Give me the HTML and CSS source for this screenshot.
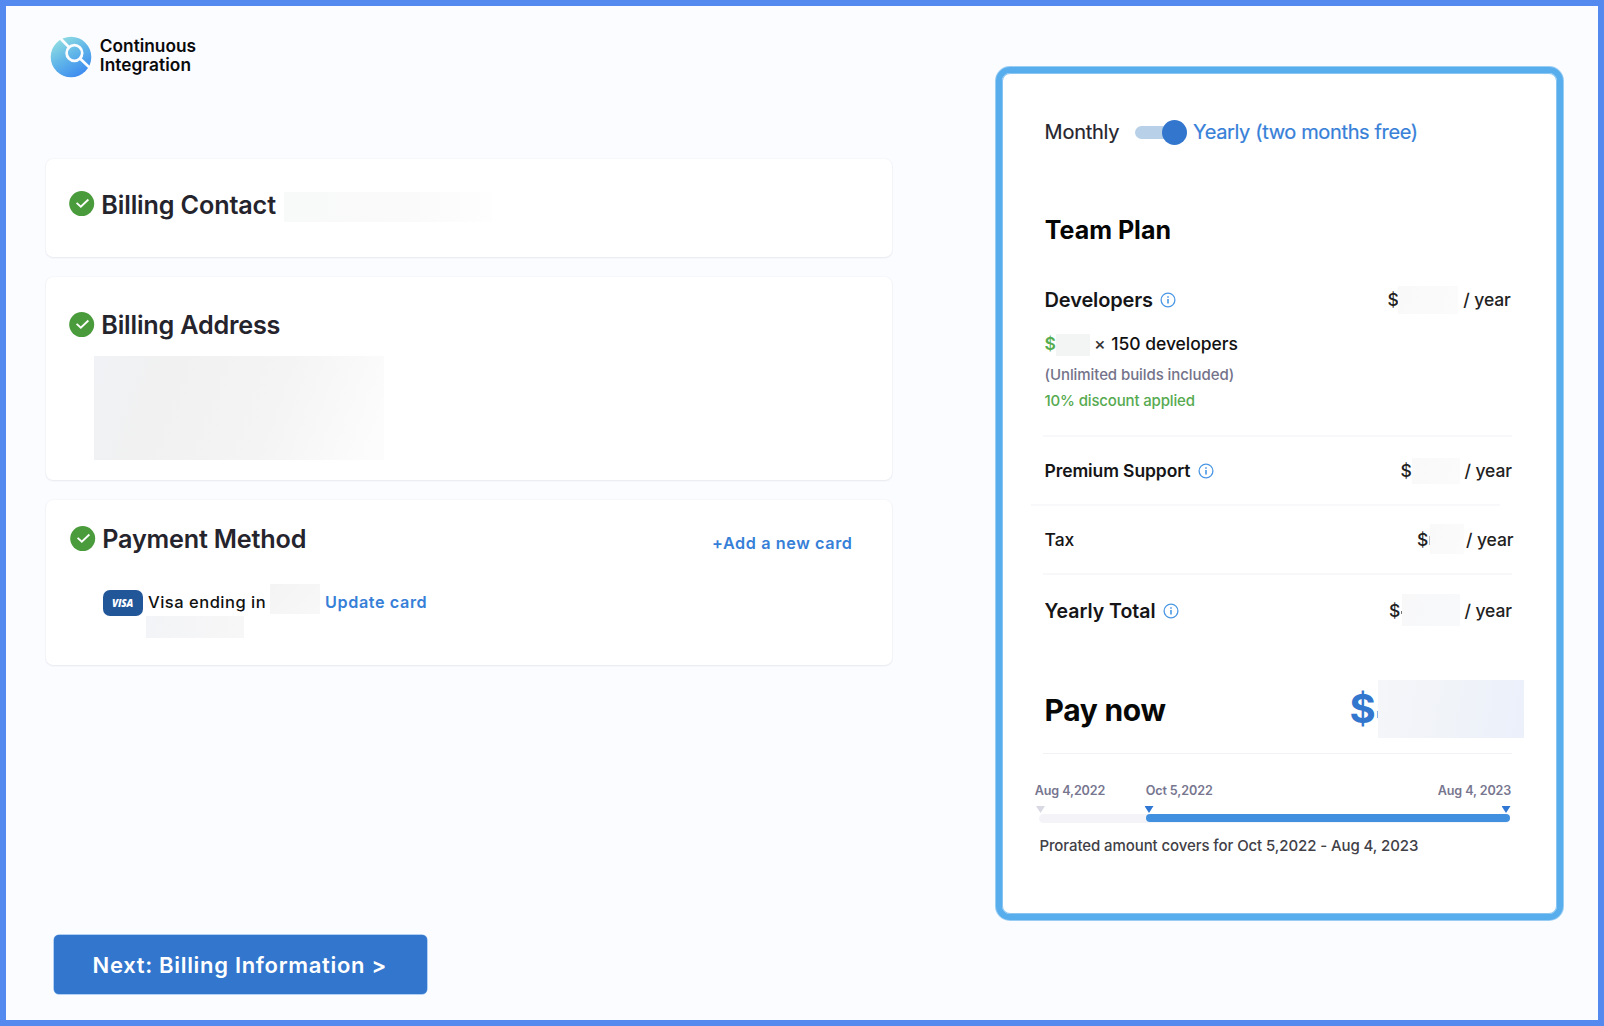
FILE: index.html
```html
<!DOCTYPE html>
<html lang="en">
<head>
<meta charset="utf-8">
<title>Continuous Integration - Billing</title>
<link rel="stylesheet" href="styles.css">
</head>
<body>
<svg width="0" height="0" class="defs" aria-hidden="true">
  <symbol id="check" viewBox="0 0 26 26"><circle cx="12.7" cy="12.6" r="12.5" fill="#4a9b3c"/><path d="M7.6 11.8l4.2 3.9 7.6-7.2" fill="none" stroke="#fff" stroke-width="1.8"/></symbol>
  <symbol id="info" viewBox="0 0 16 16"><circle cx="8" cy="8" r="6.9" fill="none" stroke="#4a97e4" stroke-width="1.3"/><path d="M8 7v4.6M8 4.2v1.5" stroke="#4a97e4" stroke-width="1.6"/></symbol>
</svg>
<div class="page">
  <main class="left">
    <header class="brand">
      <svg class="logo" viewBox="0 0 42 42">
        <defs><linearGradient id="lg" x1=".2" y1=".05" x2=".75" y2=".95"><stop offset="0" stop-color="#90dde2"/><stop offset=".5" stop-color="#5fb4e9"/><stop offset="1" stop-color="#3d8bf0"/></linearGradient></defs>
        <circle cx="21" cy="21" r="20.3" fill="url(#lg)"/>
        <g fill="none" stroke="#fbfcff" stroke-width="2.7"><circle cx="24.4" cy="17" r="7.8"/><path d="M10.5 2.5L18.8 11M30 22.6L40 32"/></g>
      </svg>
      <div class="brand-name"><span class="b1">Continuous</span><br><span class="b2">Integration</span></div>
    </header>
    <section class="card contact">
      <svg class="check"><use href="#check"/></svg>
      <h2 class="t-contact">Billing Contact</h2>
      <span class="mask m-contact"></span>
    </section>
    <section class="card address">
      <div class="head"><svg class="check"><use href="#check"/></svg><h2 class="t-address">Billing Address</h2></div>
      <span class="mask m-address"></span>
    </section>
    <section class="card payment">
      <div class="head"><svg class="check"><use href="#check"/></svg><h2 class="t-payment">Payment Method</h2><a class="add">+Add a new card</a></div>
      <div class="visa-row">
        <span class="visa">VISA</span>
        <span class="ending">Visa ending in</span>
        <span class="mask m-card"></span>
        <a class="update">Update card</a>
      </div>
      <span class="mask m-exp"></span>
    </section>
    <button class="next"><span>Next: Billing Information &gt;</span></button>
  </main>
  <aside class="panel">
    <div class="row period"><span class="monthly">Monthly</span><span class="toggle"><i></i></span><span class="yearly">Yearly (two months free)</span></div>
    <h3 class="plan"><span>Team Plan</span></h3>
    <div class="row dev"><span class="label l-dev">Developers</span><svg class="info"><use href="#info"/></svg><span class="usd">$</span><span class="mask"></span><span class="per">/ year</span></div>
    <div class="row count"><span class="green-usd">$</span><span class="mask"></span><span class="times">×</span><span class="devs">150 developers</span></div>
    <div class="note"><span class="n1">(Unlimited builds included)</span></div>
    <div class="note discount"><span class="n2">10% discount applied</span></div>
    <hr>
    <div class="row premium"><span class="label l-prem">Premium Support</span><svg class="info"><use href="#info"/></svg><span class="usd">$</span><span class="mask"></span><span class="per">/ year</span></div>
    <hr class="shift">
    <div class="row tax"><span class="label l-tax">Tax</span><span class="usd">$</span><span class="mask"></span><span class="per">/ year</span></div>
    <hr class="third">
    <div class="row total"><span class="label l-total">Yearly Total</span><svg class="info"><use href="#info"/></svg><span class="usd">$</span><span class="mask"></span><span class="per">/ year</span></div>
    <div class="row pay"><span class="pay-label">Pay now</span><span class="big-usd">$</span><span class="mask"></span></div>
    <hr class="last">
    <div class="dates"><span class="d1">Aug 4,2022</span><span class="d2">Oct 5,2022</span><span class="d3">Aug 4, 2023</span></div>
    <div class="ticks"><i class="k1"></i><i class="k2"></i><i class="k3"></i></div>
    <div class="bar"><div class="fill"></div></div>
    <p class="prorated"><span>Prorated amount covers for Oct 5,2022 - Aug 4, 2023</span></p>
  </aside>
</div>
</body>
</html>
```
FILE: styles.css
```css
* { box-sizing: border-box; }
body { margin: 0; font-family: Inter, "Liberation Sans", sans-serif; color: #111; }
.defs { display: none; }
h2, h3, p { margin: 0; }
svg, .mask { flex: none; display: block; }
span, a, h2 { white-space: nowrap; }
.page { display: flex; width: 1604px; height: 1026px; border: 6px solid #5489f0; background: #fbfcff; }

.left { width: 846px; margin-left: 40px; padding-top: 30px; }
.brand { display: flex; height: 42px; padding-left: 4px; }
.logo { width: 42px; height: 42px; }
.brand-name { margin: 1px 0 0 7.8px; font-size: 17.3px; font-weight: 600; line-height: 18.7px; color: #0a0a0c; }
.b2 { letter-spacing: .05px; }

.card { background: #fff; border-radius: 7px; box-shadow: 0 0 2px rgba(40,45,80,.08), 0 1px 2px rgba(40,45,80,.07); }
.card h2 { font-size: 25.2px; font-weight: 600; line-height: 30px; letter-spacing: -.2px; color: #25242d; }
.card .t-contact { letter-spacing: -.15px; }
.check { width: 26px; height: 26px; }
.contact { display: flex; height: 98px; margin-top: 81px; padding: 31px 0 0 23px; }
.contact .check { margin-top: 1px; }
.contact h2 { width: 182.7px; margin: 0 0 0 6.3px; }
.m-contact { width: 208px; height: 30px; margin-top: 2px; background: linear-gradient(90deg, #f8f9f9, #fafafa 60%, #fefefe); }
.head { display: flex; align-items: center; height: 30px; }
.head h2 { margin-left: 6.3px; }
.address { height: 203px; margin-top: 20px; padding: 33px 0 0 23px; }
.m-address { width: 290px; height: 104px; margin: 16px 0 0 25px; background: linear-gradient(110deg, #f0f2f5 0%, #f1f1f1 25%, #f4f4f4 60%, #fcfcfc 95%); }
.payment { height: 165px; margin-top: 20px; padding: 24px 0 0 24px; }
.add { margin: 8px 0 0 auto; padding-right: 39.5px; }
.add, .update { font-size: 16.2px; font-weight: 600; line-height: 20px; color: #3780d8; letter-spacing: .6px; }
.visa-row { display: flex; align-items: flex-start; height: 32px; margin-top: 30px; padding-left: 32.5px; }
.visa { width: 40px; height: 26px; margin-top: 5.5px; border-radius: 7px; background: #215699; color: #fff; font: italic 800 10px/26px "Open Sans", sans-serif; letter-spacing: -.2px; text-align: center; }
.ending { width: 122px; margin: 8px 0 0 5.5px; font-size: 16.5px; line-height: 20px; font-weight: 500; letter-spacing: .5px; }
.m-card { width: 50px; height: 30px; background: linear-gradient(135deg, #f4f4f4, #f8f8f9); }
.update { margin: 8px 0 0 5px; }
.m-exp { width: 98px; height: 22px; margin-left: 76px; background: linear-gradient(105deg, #f3f4f7, #f7f7f7); }
.next { display: block; width: 373px; height: 59px; margin: 270px 0 0 7.5px; padding: 0 0 0 39px; border: 0; border-radius: 5px; background: #3376cd; box-shadow: 0 0 0 .5px #6ba5e6; color: #fff; font: 600 22px/61px Inter, sans-serif; letter-spacing: .69px; text-align: left; }

.panel { width: 567px; height: 853px; margin: 61px 0 0 104px; padding: 46px 45px 0 42px; border: 6px solid #58adec; border-radius: 14px; background: #fff; box-shadow: 0 0 0 1px rgba(88,173,236,.6), inset 0 0 0 1px rgba(88,173,236,.7); }
.row { display: flex; align-items: center; line-height: 20px; }
.period { height: 26px; font-size: 20px; }
.monthly { width: 90.5px; padding-left: .6px; letter-spacing: -.25px; color: #25242d; -webkit-text-stroke: .2px; }
.toggle { width: 46px; height: 13px; border-radius: 7px; background: #b9d1e8; margin-right: 12.5px; }
.toggle i { display: block; width: 25px; height: 25px; margin: -6px 0 0 27.5px; border-radius: 50%; background: #3376cd; }
.yearly { color: #3780d8; letter-spacing: -.36px; -webkit-text-stroke: .2px; }
.plan { height: 30px; margin-top: 70px; padding-left: .8px; font-size: 25px; line-height: 30px; font-weight: 700; color: #050505; }
.label { font-weight: 600; color: #151517; padding-left: .5px; }
.info { width: 16px; height: 16px; }
.usd, .per { font-size: 17.5px; font-weight: 500; color: #222; letter-spacing: -.1px; }
.usd { margin-left: auto; }
.row .mask { background: linear-gradient(110deg, #f9f9f9, #fafbfa); }
.dev { height: 28px; margin-top: 41px; }
.dev > span:not(.mask), .dev svg { margin-bottom: 1px; }
.l-dev { width: 116px; font-size: 20px; letter-spacing: -.13px; }
.dev .usd { width: 10.5px; }
.dev .mask { width: 60px; height: 28px; }
.dev .per { width: 48.7px; margin-left: 5.3px; }
.count { height: 22px; margin-top: 20px; font-size: 17.5px; font-weight: 500; }
.count > span:not(.mask) { margin-bottom: 2px; }
.green-usd { width: 12px; padding-left: .5px; color: #55ad50; font-weight: 600; }
.count .mask { width: 34px; height: 22px; background: #f3f4f4; }
.times { width: 17px; margin-left: 4px; color: #333; }
.devs { padding-left: .3px; letter-spacing: -.03px; }
.note { height: 21px; margin-top: 8px; padding-left: .5px; font-size: 15px; line-height: 21px; font-weight: 500; letter-spacing: -.08px; color: #74738a; }
.note.discount { margin-top: 5px; letter-spacing: -.16px; color: #56aa50; }
hr { height: 2px; margin: 24px 0 0 -1px; border: 0; background: #f8f8fa; }
hr.shift { margin: 20px 12px 0 -13px; }
hr.third { margin-top: 19px; }
hr.last { height: 1px; margin-top: 15px; background: #f2f2f4; }
.premium { height: 26px; margin-top: 21px; }
.l-prem { width: 154.4px; font-size: 17.5px; letter-spacing: -.1px; }
.premium .usd { width: 11.5px; }
.premium .mask { width: 48px; height: 26px; }
.premium .per, .total .per { width: 47.5px; margin-left: 4.5px; }
.tax { height: 30px; margin-top: 18px; }
.tax > span:not(.mask) { padding-top: 2px; }
.l-tax { font-size: 17.5px; font-weight: 500; }
.tax .usd { width: 13px; }
.tax .mask { width: 34px; height: 30px; }
.tax .mask::before { content: ""; display: block; width: 1px; height: 9px; margin: 12px 0 0 -1px; background: #bbb; }
.tax .per { width: 46px; margin-left: 2px; }
.total { height: 32px; margin-top: 19px; }
.total > span:not(.mask), .total svg { margin-top: 2px; }
.l-total { width: 118.5px; font-size: 19.5px; }
.total .usd { width: 13px; }
.total .mask { width: 58px; height: 32px; background: linear-gradient(110deg, #f8f8f9, #f7f9fb); }
.total .mask::before { content: ""; display: block; width: 1px; height: 3px; margin: 17px 0 0 -1px; background: #777; }
.pay { height: 58px; margin-top: 54px; }
.pay-label { font-size: 30px; font-weight: 700; letter-spacing: -.3px; padding: 2px 0 0 .5px; color: #080808; }
.big-usd { width: 28.5px; margin: 0 0 1px auto; font-size: 40px; font-weight: 700; color: #3376cd; }
.pay .mask { width: 146px; height: 58px; margin-right: -12px; background: linear-gradient(100deg, #f5f6fa, #f0f3f8 50%, #ebf0fb); }
.pay .mask::before { content: ""; display: block; width: 1px; height: 7px; margin: 31px 0 0 -1px; background: #8fb6e8; }
.dates { display: flex; height: 17px; margin: 28px 0 0 -9.3px; font-size: 12.6px; line-height: 17px; font-weight: 600; letter-spacing: -.12px; color: #77768f; }
.d1 { width: 111px; }
.d3 { margin-left: auto; padding-right: .8px; }
.ticks { display: flex; height: 7px; margin: 7px 0 0 -8px; }
.ticks i { width: 9px; height: 7px; background: #2f77d2; clip-path: polygon(0 0, 100% 0, 50% 100%); }
.ticks .k1 { background: #d9d9e4; }
.ticks .k2 { margin-left: 99.5px; }
.ticks .k3 { margin-left: auto; margin-right: 1.5px; }
.bar { height: 9px; margin: 1px 2.5px 0 -5px; border-radius: 5px; background: #f3f3f8; }
.fill { height: 8px; margin-left: 107px; border-radius: 4px; background: #4190df; }
.prorated { margin: 12.5px 0 0 -4.6px; font-size: 15px; line-height: 20px; font-weight: 500; letter-spacing: -.09px; color: #414047; }
```
